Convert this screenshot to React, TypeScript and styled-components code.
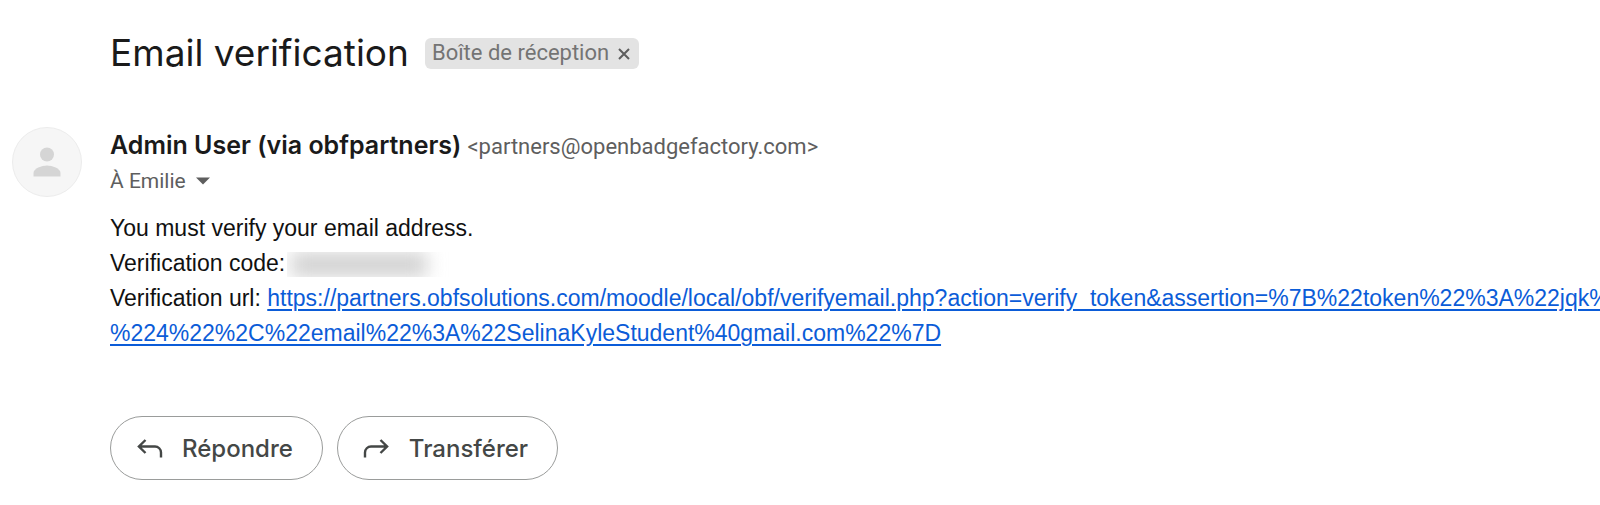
import React from 'react';
import styled, { createGlobalStyle } from 'styled-components';

const GlobalStyle = createGlobalStyle`
  * { box-sizing: border-box; }
  body {
    margin: 0;
    background: #fff;
    color: #1a1a1a;
    font-family: Roboto, 'Liberation Sans', sans-serif;
  }
`;

const Page = styled.main`
  overflow: hidden;
  padding: 32px 0 24px;
`;

const SubjectRow = styled.header`
  display: flex;
  align-items: center;
  gap: 16px;
  padding-left: 110px;
`;

const Subject = styled.h1`
  margin: 0;
  font-family: Inter, Roboto, sans-serif;
  font-size: 37px;
  font-weight: 400;
  line-height: 42px;
`;

const LabelChip = styled.span`
  display: flex;
  align-items: center;
  gap: 7px;
  height: 31px;
  padding: 0 7px;
  border-radius: 6px;
  background: #e3e3e3;
  color: #747474;
  font-size: 22px;
  line-height: 30px;
`;

const PlainButton = styled.button`
  display: flex;
  align-items: center;
  padding: 0;
  border: 0;
  background: none;
  color: #5e5e5e;
  cursor: pointer;
`;

const Message = styled.article`
  display: grid;
  grid-template-columns: 98px minmax(0, 1fr);
  margin-top: 53px;
  padding-left: 12px;
`;

const Avatar = styled.div`
  display: flex;
  align-items: center;
  justify-content: center;
  width: 70px;
  height: 70px;
  border: 1px solid #ececec;
  border-radius: 50%;
  background: #f6f6f6;
`;

const SenderRow = styled.div`
  display: flex;
  align-items: baseline;
  gap: 6px;
  line-height: 36px;
  white-space: nowrap;
`;

const SenderName = styled.span`
  font-family: Inter, Roboto, sans-serif;
  font-size: 25px;
  font-weight: 600;
`;

const SenderAddress = styled.span`
  color: #5e5e5e;
  font-size: 22px;
`;

const RecipientRow = styled.div`
  display: flex;
  align-items: center;
  gap: 10px;
  color: #5e5e5e;
  font-size: 21px;
  line-height: 32px;
`;

const Body = styled.div`
  margin-top: 14px;
  color: #111;
  font-family: 'Liberation Sans', Arial, sans-serif;
  font-size: 23px;
  line-height: 35px;
  white-space: nowrap;
`;

const Line = styled.p`
  display: flex;
  align-items: center;
  margin: 0;
`;

const LinkLine = styled.p`
  margin: 0;
`;

const HiddenCode = styled.span`
  width: 164px;
  height: 25px;
  margin: 2px 0 0 2px;
  overflow: hidden;

  &::before {
    content: '';
    display: block;
    width: 136px;
    height: 25px;
    margin-left: 4px;
    background: #d2d2d2;
    filter: blur(9px);
  }
`;

const BodyLink = styled.a`
  color: #0b5cd8;
  text-decoration: underline;
  text-decoration-thickness: 2px;
  text-underline-offset: 3px;
`;

const Actions = styled.div`
  display: flex;
  gap: 14px;
  margin-top: 65px;
`;

const ActionButton = styled.button`
  display: flex;
  align-items: center;
  gap: 19px;
  height: 64px;
  padding: 0 29px 0 25px;
  border: 1px solid #9a9c9b;
  border-radius: 32px;
  background: #fff;
  color: #444746;
  font-family: Inter, Roboto, sans-serif;
  font-size: 24px;
  font-weight: 450;
  cursor: pointer;
`;

const CloseIcon = () => (
  <svg width="16" height="14" viewBox="0 0 16 14" fill="none" stroke="currentColor" strokeWidth="2" aria-hidden="true">
    <path d="M3 3l10 10M13 3l-10 10" />
  </svg>
);

const PersonIcon = () => (
  <svg width="28" height="30" viewBox="0 0 28 30" fill="#d5d5d5" aria-hidden="true">
    <circle cx="14" cy="7.5" r="7" />
    <path d="M.5 29.5v-3.500c0-4.600 8.400-7.500 13.500-7.500s13.500 2.900 13.500 7.500v3.500z" />
  </svg>
);

const CaretIcon = () => (
  <svg width="14" height="8" viewBox="0 0 14 8" fill="currentColor" aria-hidden="true">
    <path d="M0 .5h14l-7 7z" />
  </svg>
);

const ReplyIcon = () => (
  <svg width="27" height="22" viewBox="0 0 27 22" fill="none" stroke="currentColor" strokeWidth="2.4" aria-hidden="true">
    <path d="M9.500 3L2.900 9.500l6.600 6.500M3 9.500h16a6 6 0 0 1 6 6v5" />
  </svg>
);

const ForwardIcon = () => (
  <svg width="27" height="22" viewBox="0 0 27 22" fill="none" stroke="currentColor" strokeWidth="2.4" aria-hidden="true">
    <path d="M17.500 3l6.600 6.500-6.600 6.500M24 9.500H8a6 6 0 0 0-6 6v5" />
  </svg>
);

const verifyUrlStart =
  'https://partners.obfsolutions.com/moodle/local/obf/verifyemail.php?action=verify_token&assertion=%7B%22token%22%3A%22jqk%';
const verifyUrlEnd = '%224%22%2C%22email%22%3A%22SelinaKyleStudent%40gmail.com%22%7D';

export default function App() {
  return (
    <Page lang="fr">
      <GlobalStyle />
      <SubjectRow>
        <Subject>Email verification</Subject>
        <LabelChip>
          Boîte de réception
          <PlainButton type="button" aria-label="Supprimer le libellé">
            <CloseIcon />
          </PlainButton>
        </LabelChip>
      </SubjectRow>
      <Message>
        <Avatar>
          <PersonIcon />
        </Avatar>
        <div>
          <SenderRow>
            <SenderName>Admin User (via obfpartners)</SenderName>
            <SenderAddress>&lt;partners@openbadgefactory.com&gt;</SenderAddress>
          </SenderRow>
          <RecipientRow>
            À Emilie
            <PlainButton type="button" aria-label="Afficher les détails">
              <CaretIcon />
            </PlainButton>
          </RecipientRow>
          <Body>
            <Line>You must verify your email address.</Line>
            <Line>
              Verification code:
              <HiddenCode />
            </Line>
            <LinkLine>
              Verification url:{' '}
              <BodyLink href={`${verifyUrlStart}${verifyUrlEnd}`}>
                {verifyUrlStart}
                <br />
                {verifyUrlEnd}
              </BodyLink>
            </LinkLine>
          </Body>
          <Actions>
            <ActionButton type="button">
              <ReplyIcon />
              Répondre
            </ActionButton>
            <ActionButton type="button">
              <ForwardIcon />
              Transférer
            </ActionButton>
          </Actions>
        </div>
      </Message>
    </Page>
  );
}
